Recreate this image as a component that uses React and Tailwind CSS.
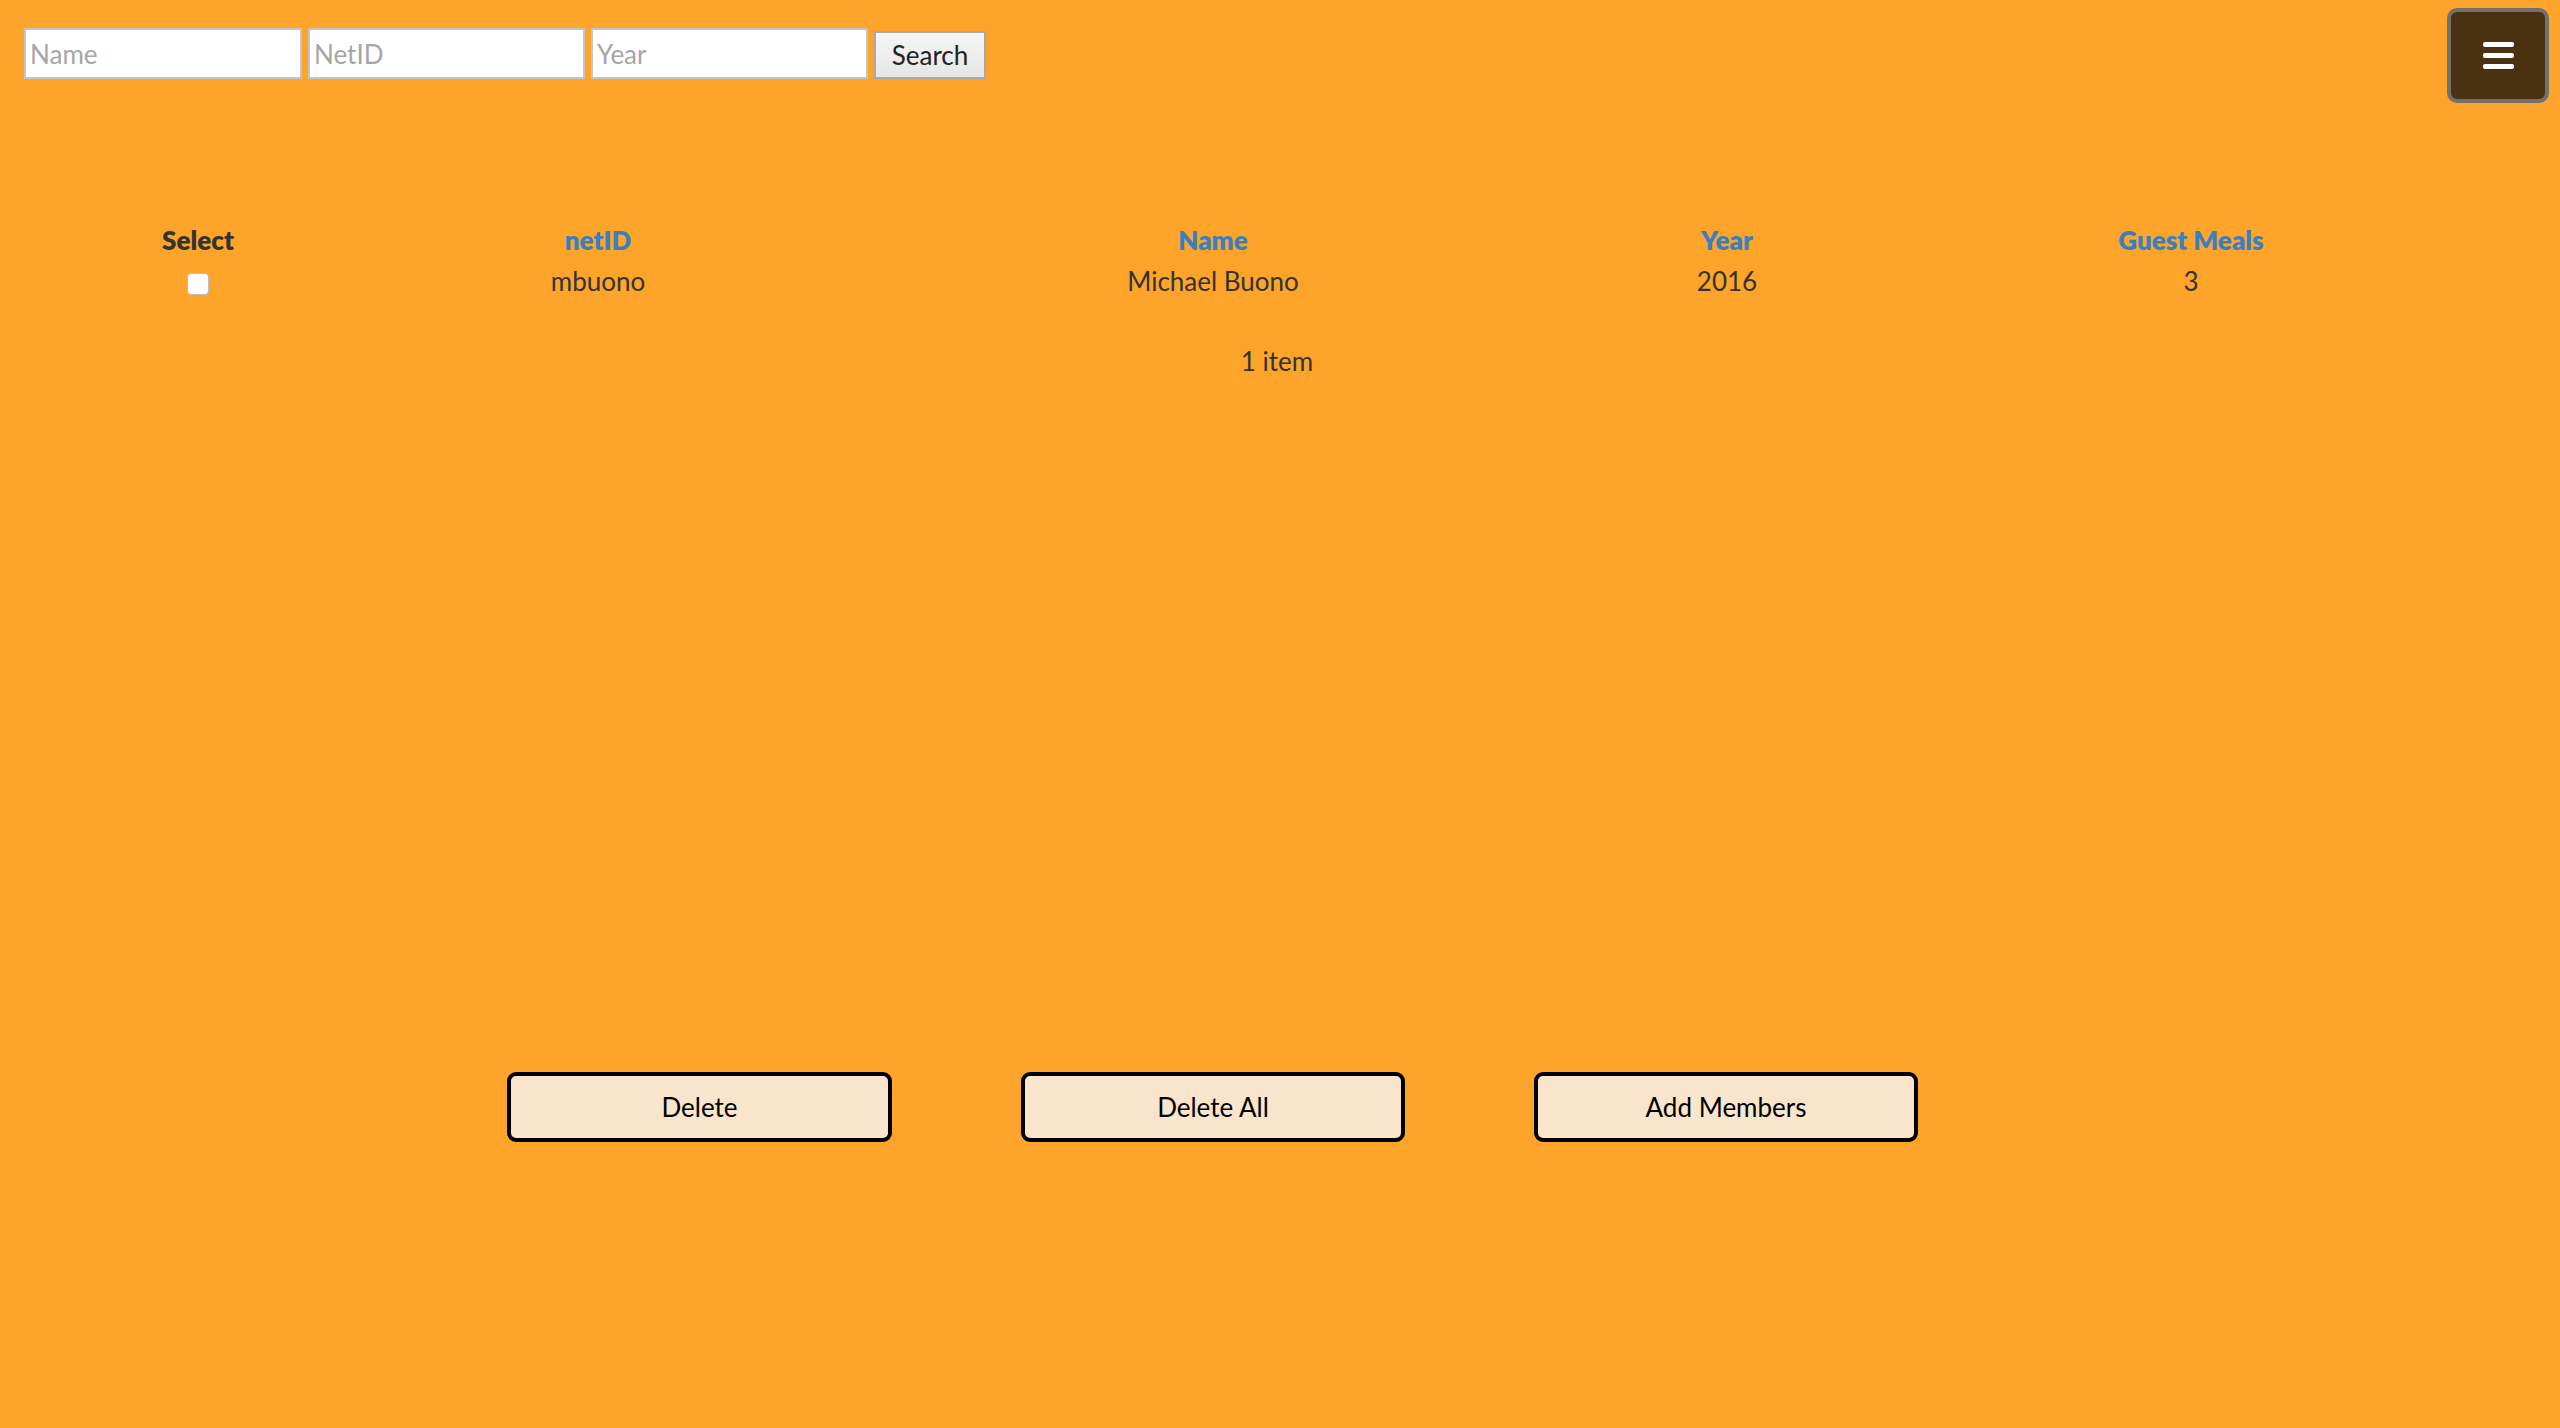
import React from 'react';

const font = { fontFamily: 'Lato, "Noto Sans", sans-serif' };

export default function App() {
    return (
        <div className="min-h-[1428px] w-full bg-[#fea42b] text-[#333] relative text-[26px]" style={font}>
            <button className="absolute right-[11px] top-[8px] w-[102px] h-[95px] rounded-[10px] border-[4px] border-[#717171] bg-[#4a3210] flex flex-col items-center justify-center gap-[6px]">
                <span className="block w-[31px] h-[5px] rounded-[2px] bg-white"></span>
                <span className="block w-[31px] h-[5px] rounded-[2px] bg-white"></span>
                <span className="block w-[31px] h-[5px] rounded-[2px] bg-white"></span>
            </button>

            {/* search bar */}
            <div className="flex items-end gap-[6px] pl-[24px] pt-[28px]">
                <input className="w-[278px] h-[51px] border-2 border-[#c4c4c4] bg-white px-[4px] placeholder:text-[#a6a6a6] outline-none" placeholder="Name" />
                <input className="w-[277px] h-[51px] border-2 border-[#c4c4c4] bg-white px-[4px] placeholder:text-[#a6a6a6] outline-none" placeholder="NetID" />
                <input className="w-[277px] h-[51px] border-2 border-[#c4c4c4] bg-white px-[4px] placeholder:text-[#a6a6a6] outline-none" placeholder="Year" />
                <button className="w-[112px] h-[48px] border-2 border-[#a9a9a9] bg-gradient-to-b from-[#f6f6f6] to-[#e6e6e6] text-[#222]">Search</button>
            </div>

            {/* members table */}
            <table className="ml-[80px] mt-[141px] w-[2394px] table-fixed border-collapse">
                <thead>
                    <tr className="h-[41px]">
                        <th className="w-[236px] font-extrabold text-[#333]">Select</th>
                        <th className="w-[564px] font-extrabold text-[#3a7fbf]">netID</th>
                        <th className="w-[666px] font-extrabold text-[#3a7fbf]">Name</th>
                        <th className="w-[362px] font-extrabold text-[#3a7fbf]">Year</th>
                        <th className="w-[566px] font-extrabold text-[#3a7fbf]">Guest Meals</th>
                    </tr>
                </thead>
                <tbody>
                    <tr className="h-[40px] text-center">
                        <td>
                            <input type="checkbox" className="appearance-none w-[22px] h-[22px] rounded-[4px] border border-[#bdbdbd] bg-white align-middle" />
                        </td>
                        <td>mbuono</td>
                        <td>Michael Buono</td>
                        <td>2016</td>
                        <td>3</td>
                    </tr>
                </tbody>
            </table>

            <div className="mt-[40px] h-[40px] flex items-center justify-center pr-[6px]">1 item</div>

            {/* actions */}
            <div className="mt-[691px] ml-[507px] flex gap-[129px]">
                <button className="w-[385px] h-[70px] rounded-[9px] border-[4px] border-black bg-[#f8e5cb] text-black">Delete</button>
                <button className="w-[384px] h-[70px] rounded-[9px] border-[4px] border-black bg-[#f8e5cb] text-black">Delete All</button>
                <button className="w-[384px] h-[70px] rounded-[9px] border-[4px] border-black bg-[#f8e5cb] text-black">Add Members</button>
            </div>
        </div>
    );
}
